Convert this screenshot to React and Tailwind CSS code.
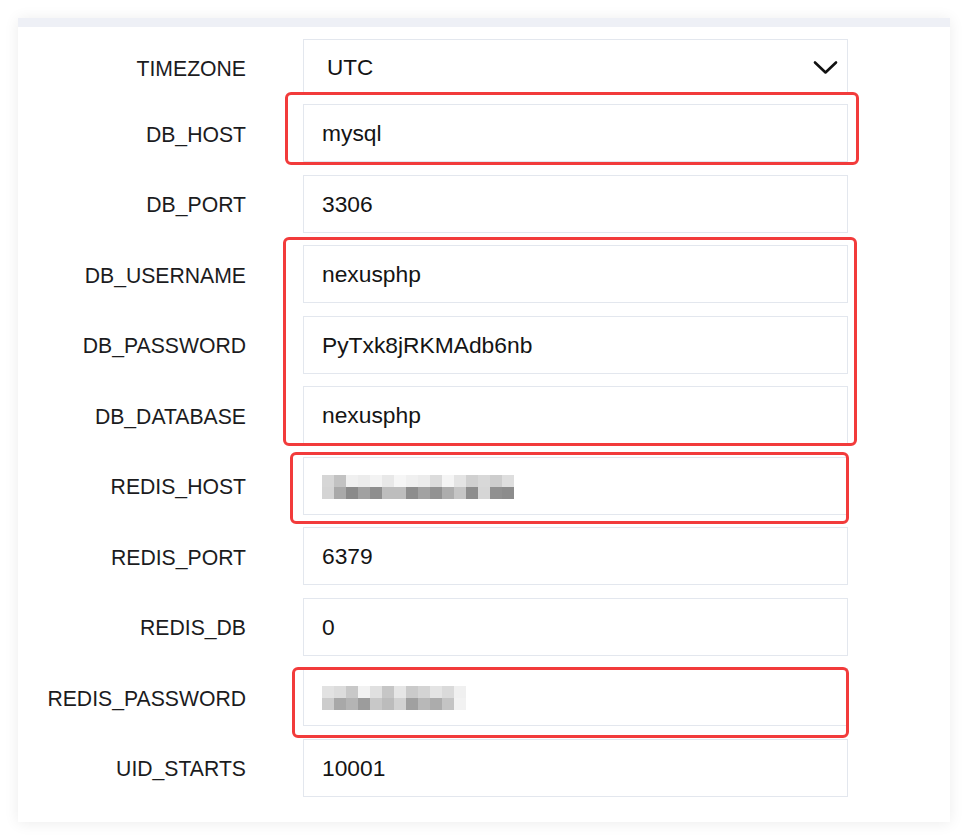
import React from "react";

const rows = [
  { label: "DB_HOST", value: "mysql" },
  { label: "DB_PORT", value: "3306" },
  { label: "DB_USERNAME", value: "nexusphp" },
  { label: "DB_PASSWORD", value: "PyTxk8jRKMAdb6nb" },
  { label: "DB_DATABASE", value: "nexusphp" },
  { label: "REDIS_HOST", blur: "host" },
  { label: "REDIS_PORT", value: "6379" },
  { label: "REDIS_DB", value: "0" },
  { label: "REDIS_PASSWORD", blur: "pass" },
  { label: "UID_STARTS", value: "10001" },
];

// mosaic blocks (top row / bottom row) of the redacted values
const hostTop = ["bg-[#d6d6d6]", "bg-[#c2c2c2]", "bg-[#f0f0f0]", "bg-[#ececec]", "bg-[#f3f3f3]", "bg-[#e8e8e8]", "bg-[#f6f6f6]", "bg-[#f0f0f0]", "bg-[#ececec]", "bg-[#dcdcdc]", "bg-[#f5f5f5]", "bg-[#e4e4e4]", "bg-[#d0d0d0]", "bg-[#d8d8d8]", "bg-[#cdcdcd]", "bg-[#dedede]"];
const hostBottom = ["bg-[#d4d4d4]", "bg-[#a9a9a9]", "bg-[#8a8a8a]", "bg-[#a1a1a1]", "bg-[#8e8e8e]", "bg-[#bdbdbd]", "bg-[#bdbdbd]", "bg-[#8d8d8d]", "bg-[#a2a2a2]", "bg-[#929292]", "bg-[#adadad]", "bg-[#c5c5c5]", "bg-[#8d8d8d]", "bg-[#d6d6d6]", "bg-[#909090]", "bg-[#8c8c8c]"];
const passTop = ["bg-[#e2e2e2]", "bg-[#dcdcdc]", "bg-[#c8c8c8]", "bg-[#f2f2f2]", "bg-[#e0e0e0]", "bg-[#c6c6c6]", "bg-[#e6e6e6]", "bg-[#cacaca]", "bg-[#d4d4d4]", "bg-[#e4e4e4]", "bg-[#dadada]", "bg-[#f0f0f0]"];
const passBottom = ["bg-[#cccccc]", "bg-[#a8a8a8]", "bg-[#b4b4b4]", "bg-[#9c9c9c]", "bg-[#c8c8c8]", "bg-[#bcbcbc]", "bg-[#d2d2d2]", "bg-[#a0a0a0]", "bg-[#b8b8b8]", "bg-[#acacac]", "bg-[#c4c4c4]", "bg-[#f2f2f2]"];

const Mosaic = ({ top, bottom }) => (
  <div className="flex flex-col blur-[0.6px]">
    <div className="flex">
      {top.map((c, i) => (
        <div key={i} className={`w-[12px] h-[12px] ${c}`} />
      ))}
    </div>
    <div className="flex">
      {bottom.map((c, i) => (
        <div key={i} className={`w-[12px] h-[12px] ${c}`} />
      ))}
    </div>
  </div>
);

const Label = ({ children }) => (
  <div className="w-[228px] shrink-0 pt-[3px] text-right text-[21.2px] text-[#1c1c1e]">{children}</div>
);

const App = () => {
  return (
    <div className="min-h-screen bg-white pt-[18px] px-[18px] font-['Liberation_Sans',Arial,sans-serif]">
      <div className="relative w-[932px] bg-white shadow-[0_1px_14px_rgba(0,0,0,0.08)]">
        <div className="h-[9px] bg-[#eef0f6]" />

        <div className="pt-[12px] pb-[25.5px]">
          {/* TIMEZONE select */}
          <div className="flex items-center h-[56px]">
            <Label>TIMEZONE</Label>
            <div className="ml-[57px] w-[545px] h-full border border-[#e3e7ee] flex items-center justify-between pl-[23px] pr-[9px] text-[22.5px] text-[#141414]">
              <span className="pt-[1px]">UTC</span>
              <svg width="25" height="15" viewBox="0 0 25 15" fill="none">
                <path d="M2 2.5 L12.5 12.5 L23 2.5" stroke="#111" strokeWidth="2.6" strokeLinecap="round" strokeLinejoin="round" />
              </svg>
            </div>
          </div>

          {rows.map((r, i) => (
            <div key={r.label} className={`flex items-center h-[58px] ${i === 0 ? "mt-[9px]" : "mt-[12.5px]"}`}>
              <Label>{r.label}</Label>
              <div className="ml-[57px] w-[545px] h-full border border-[#e3e7ee] flex items-center pl-[18px] text-[22.8px] text-[#141414]">
                {r.blur === "host" ? (
                  <div className="mt-[2px]"><Mosaic top={hostTop} bottom={hostBottom} /></div>
                ) : r.blur === "pass" ? (
                  <div className="mt-[2px]"><Mosaic top={passTop} bottom={passBottom} /></div>
                ) : (
                  <span className="pt-[1px]">{r.value}</span>
                )}
              </div>
            </div>
          ))}
        </div>

        {/* red annotation boxes */}
        <div className="absolute left-[267px] top-[74px] w-[574px] h-[73px] border-[3px] border-[#f23b3b] rounded-[6px]" />
        <div className="absolute left-[265px] top-[219px] w-[574px] h-[209px] border-[3px] border-[#f23b3b] rounded-[6px]" />
        <div className="absolute left-[272px] top-[434px] w-[559px] h-[72px] border-[3px] border-[#f23b3b] rounded-[6px]" />
        <div className="absolute left-[274px] top-[649px] w-[557px] h-[71px] border-[3px] border-[#f23b3b] rounded-[6px]" />
      </div>
    </div>
  );
};

export default App;
